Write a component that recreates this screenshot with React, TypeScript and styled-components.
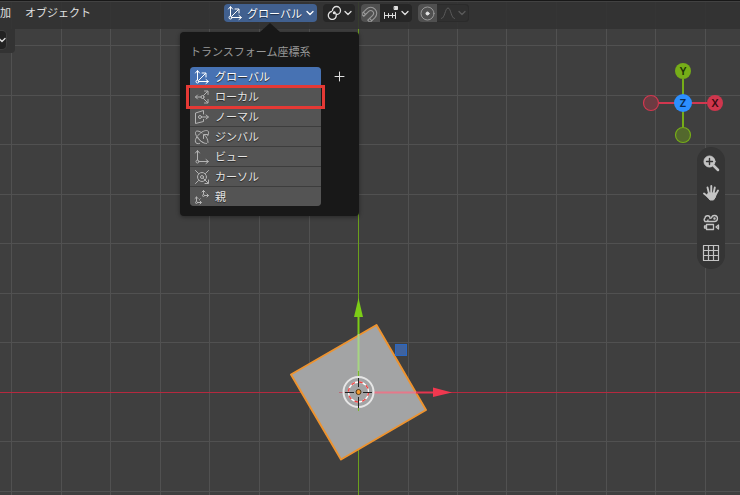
import React, { useState } from "react";
import styled, { createGlobalStyle, css } from "styled-components";

const GlobalStyle = createGlobalStyle`
  * { box-sizing: border-box; }
  body {
    margin: 0;
    background: #3f3f3f;
    color: #e0e0e0;
    font: 11px/16px "Noto Sans CJK JP", "Noto Sans", sans-serif;
  }
  button {
    margin: 0;
    padding: 0;
    border: 0;
    background: none;
    color: inherit;
    font: inherit;
  }
`;

const Editor = styled.div`
  position: relative;
  display: flex;
  flex-direction: column;
  min-height: 100vh;
  overflow: hidden;
`;

const Scene = styled.svg`
  position: absolute;
  inset: 0;
  width: 100%;
  height: 100%;
`;

const Header = styled.header`
  position: relative;
  z-index: 1;
  display: flex;
  align-items: flex-start;
  height: 29px;
  padding-top: 3px;
  border-top: 1px solid #181818;
  background: rgba(50, 50, 50, 0.9);
  box-shadow: inset 0 1px #424242;
`;

const MenuBar = styled.nav`
  display: flex;
  gap: 14px;
  width: 224px;
  text-shadow: 0 1px 1px #111;
`;

const Tools = styled.div`
  display: flex;
  gap: 6px;
`;

const Anchor = styled.div`
  position: relative;
`;

const Group = styled.div`
  display: flex;
  height: 18px;
  border-radius: 4px;
  overflow: hidden;
  background: #262626;
`;

const FadedGroup = styled(Group)`
  background: #303030;
  box-shadow: inset 0 0 0 1px #2b2b2b;
`;

const HeaderButton = styled.button<{ $tone?: "blue" | "raised" | "muted" }>`
  display: flex;
  align-items: center;
  gap: 2px;
  height: 18px;
  padding: 0 3px;
  color: #e0e0e0;
  ${(p) => p.$tone === "raised" && css`
    padding: 0 1px;
    background: #505050;
    color: #999;
  `}
  ${(p) => p.$tone === "muted" && css`color: #5a5a5a;`}
  ${(p) => p.$tone === "blue" && css`
    gap: 4px;
    width: 93px;
    border-radius: 4px;
    background: #41608f;
    color: #fff;
    text-shadow: 0 1px 1px #1b2b45;
  `}
`;

const Popover = styled.section`
  position: absolute;
  top: 28px;
  left: -44px;
  width: 179px;
  padding: 11px 10px 10px;
  border-radius: 4px;
  background: #181818;
  box-shadow: 0 1px 4px rgba(0, 0, 0, 0.4);

  &::before {
    content: "";
    position: absolute;
    left: 80px;
    bottom: 100%;
    border: solid transparent;
    border-width: 0 10px 9px;
    border-bottom-color: #181818;
  }
`;

const PopoverTitle = styled.h2`
  margin: 0 0 8px;
  font-size: 11px;
  font-weight: 400;
  line-height: 16px;
  color: #999;
`;

const PopoverBody = styled.div`
  display: flex;
  align-items: flex-start;
  justify-content: space-between;
`;

const OptionList = styled.div`
  display: grid;
  gap: 1px;
  width: 131px;
  border-radius: 4px;
  background: #3d3d3d;
`;

const Option = styled.button<{ $active: boolean }>`
  position: relative;
  display: flex;
  align-items: center;
  gap: 5px;
  height: 19px;
  padding: 0 4px;
  background: ${(p) => (p.$active ? "#4772b3" : "#545454")};
  color: ${(p) => (p.$active ? "#fff" : "#e6e6e6")};
  text-shadow: 0 1px 1px #222;

  &:first-child { border-radius: 4px 4px 0 0; }
  &:last-child { border-radius: 0 0 4px 4px; }
  svg { color: ${(p) => (p.$active ? "#fff" : "#b4b4b4")}; }
`;

const OptionLabel = styled.span`
  padding-bottom: 2px;
`;

const Highlight = styled.span`
  position: absolute;
  z-index: 1;
  inset: -2px -4px -3px;
  border: 3px solid #e53935;
`;

const AddButton = styled.button`
  display: grid;
  place-items: center;
  width: 19px;
  height: 19px;
`;

const AddSlot = styled.div`
  display: flex;
  width: 27px;
  padding-left: 8px;
`;

const Viewport = styled.main`
  position: relative;
  display: flex;
  justify-content: space-between;
  align-items: flex-start;
`;

const CornerTab = styled.div`
  width: 15px;
  height: 24px;
  padding-top: 2px;
  border-radius: 0 0 4px 0;
  background: #333;
`;

const CornerButton = styled.button`
  display: flex;
  align-items: center;
  justify-content: flex-end;
  width: 6px;
  height: 18px;
  overflow: hidden;
  border-radius: 0 4px 4px 0;
  background: #222;
  box-shadow: 0 0 0 1px #3e3e3e;
`;

const Navigation = styled.aside`
  display: flex;
  flex-direction: column;
  align-items: flex-end;
  gap: 3px;
  padding: 33px 15px 0 0;
`;

const NavTools = styled.div`
  display: grid;
  grid-auto-rows: 30px;
  width: 28px;
  padding: 1px 0;
  border-radius: 14px;
  background: #353535;
`;

const NavButton = styled.button`
  display: grid;
  place-items: center;
  color: #c4c4c4;
`;

const GizmoDrawing = styled.svg`
  margin-right: 1px;
`;

const Glyph = styled.svg.attrs({ "aria-hidden": true })`
  flex: none;
  fill: none;
  stroke: currentColor;
  stroke-linecap: round;
  stroke-linejoin: round;
`;

type Kind = "global" | "local" | "normal" | "gimbal" | "view" | "cursor" | "parent";

const drawings: Record<Kind, React.ReactNode> = {
  global: (
    <>
      <path d="M3.500 11V2M1.500 4l2-2.500 2 2.500M5 12.500h9M12 10.500l2.500 2-2.500 2M5 11l6.500-6.500M8 4h4v4" />
      <circle cx="3.500" cy="12.500" r="1.500" />
    </>
  ),
  local: (
    <>
      <path d="M7 8H1.500M3.500 6l-2 2 2 2M9.500 6.500l4-4M10.500 2H14v3.500M9.500 9.500l4 4M14 10.500V14h-3.500" />
      <circle cx="8.500" cy="8" r="1.500" />
    </>
  ),
  normal: (
    <>
      <path d="M9.500 5V1.500l-8 2.500v10.500l8-2V10.500M7.500 8H14M12 6l2.500 2-2.500 2" />
      <circle cx="6" cy="8" r="1.500" />
    </>
  ),
  gimbal: (
    <>
      <path d="M9 13.500C6 12.500 1 6.500 1.500 3.500 2 1 5.500 2 8 4M5.500 14.500C3.500 15 2 14.500 1.500 13 .5 10 4.500 5 8 3s6-2 6.500 0c.3 1.200-.2 2.500-.8 3.800" />
      <path d="M4 8.500C5.500 11.500 9 14.500 12.500 14.500M14 13.500c0-2.500-1-5-3.500-7.500M9.500 9.500V5.500h4" />
    </>
  ),
  view: (
    <>
      <path d="M3.500 11V2M1.500 4l2-2.500 2 2.500M5 12.500h9M12 10.500l2.500 2-2.500 2" />
      <circle cx="3.500" cy="12.500" r="1.500" />
    </>
  ),
  cursor: (
    <>
      <circle cx="8" cy="8" r="4.500" />
      <circle cx="8" cy="8" r="1.500" />
      <path d="M1.500 1.500l3 3M14.500 1.500l-3 3M1.500 14.500l3-3M9.500 9.500l4.500 4.500M14.500 11v3.500H11" />
    </>
  ),
  parent: (
    <>
      <path d="M9.500 5.500V1.500M8 3l1.500-1.500L11 3M10.500 6.500h4M13 5l1.500 1.500L13 8M2.500 12V8M1 9.500L2.500 8 4 9.500M3.500 13.500H7M6 12l1.500 1.500L6 15" />
      <circle cx="9.500" cy="6.500" r="1" />
      <circle cx="2.500" cy="13.500" r="1" />
      <path d="M5.500 10.500l2-2" strokeDasharray="1 2" />
    </>
  ),
};

const AxisIcon = ({ kind }: { kind: Kind }) => (
  <Glyph width="16" height="16" viewBox="0 0 16 16">{drawings[kind]}</Glyph>
);

const Chevron = () => (
  <Glyph width="8" height="8" viewBox="0 0 8 8" strokeWidth="1.300"><path d="M1 2.500l3 3 3-3" /></Glyph>
);

const options: { kind: Kind; label: string }[] = [
  { kind: "global", label: "グローバル" },
  { kind: "local", label: "ローカル" },
  { kind: "normal", label: "ノーマル" },
  { kind: "gimbal", label: "ジンバル" },
  { kind: "view", label: "ビュー" },
  { kind: "cursor", label: "カーソル" },
  { kind: "parent", label: "親" },
];

const SceneView = () => (
  <Scene viewBox="0 0 740 495" preserveAspectRatio="xMidYMid slice" aria-hidden="true">
    <g stroke="#515151" shapeRendering="crispEdges">
      {[11, 61, 110, 160, 209, 259, 309, 408, 457, 506, 556, 606, 655, 705].map((x) => (
        <path key={x} d={`M${x + 0.5} 0v495`} />
      ))}
      {[45, 95, 144, 194, 243, 293, 342, 441, 491].map((y) => (
        <path key={y} d={`M0 ${y + 0.5}h740`} />
      ))}
      <path stroke="#6ca01c" d="M358.500 0v495" />
      <path stroke="#b5293f" d="M0 392.500h740" />
    </g>
    <path d="M376.500 325L426 410l-85 49.500-50-85z" fill="#a3a4a5" stroke="#ed932f" strokeWidth="2" strokeLinejoin="round" />
    <path d="M358.500 317v17" stroke="#7ccd17" strokeWidth="2" />
    <path d="M358.500 334v42" stroke="#a6d582" strokeWidth="2" />
    <path d="M358.500 371v5M358.500 405v6" stroke="#7cb82a" />
    <path d="M354 317h9l-4.500-19z" fill="#7ccd17" />
    <path d="M374 392.500h42" stroke="#e6788a" strokeWidth="2" />
    <path d="M416 392.500h17" stroke="#e5354f" strokeWidth="2" />
    <path d="M339 392.500h6" stroke="#b96a76" />
    <path d="M433 387.500v9.500l19-4.500z" fill="#f0384f" />
    <rect x="395.500" y="344.500" width="11" height="11" fill="#3f639f" stroke="#2867c4" />
    <circle cx="358.500" cy="392" r="15" fill="none" stroke="#e6e6e6" strokeWidth="2" />
    <circle cx="358.500" cy="392" r="10" fill="none" stroke="#fff" strokeWidth="1.300" />
    <circle cx="358.500" cy="392" r="10" fill="none" stroke="#ef4444" strokeWidth="1.400" strokeDasharray="3.927" />
    <path d="M358.500 378v9M358.500 397v11M345 392.500h9M363 392.500h9" stroke="#222" />
    <circle cx="358.500" cy="392" r="2.500" fill="#f39a2e" stroke="#4b3418" />
  </Scene>
);

const Gizmo = () => (
  <GizmoDrawing width="82" height="82" viewBox="0 0 82 82" role="img" aria-label="X Y Z">
    <path d="M17 41h48" stroke="#d2374f" strokeWidth="2" />
    <path d="M41 17v48" stroke="#76ad18" strokeWidth="2" />
    <circle cx="9" cy="41" r="7.500" fill="#6c3b42" stroke="#d2374f" strokeWidth="1.200" />
    <circle cx="41" cy="73" r="7.500" fill="#53682d" stroke="#76ad18" strokeWidth="1.200" />
    <circle cx="73" cy="41" r="8" fill="#cf364d" />
    <circle cx="41" cy="9" r="8" fill="#76ad18" />
    <circle cx="41" cy="41" r="9" fill="#2c8fff" />
    <g fontFamily="Noto Sans, sans-serif" fontSize="11" fontWeight="600" textAnchor="middle">
      <text x="73" y="45" fill="#360b12">X</text>
      <text x="41" y="13" fill="#203306">Y</text>
      <text x="41" y="45" fill="#082b53">Z</text>
    </g>
  </GizmoDrawing>
);

export default function App() {
  const [active, setActive] = useState<Kind>("global");
  const current = options.find((o) => o.kind === active)!;

  return (
    <Editor>
      <GlobalStyle />
      <SceneView />
      <Header>
        <MenuBar>
          <button>加</button>
          <button>オブジェクト</button>
        </MenuBar>
        <Tools>
          <Anchor>
            <HeaderButton $tone="blue" aria-expanded="true">
              <AxisIcon kind={active} />
              {current.label}
              <Chevron />
            </HeaderButton>
            <Popover aria-label="トランスフォーム座標系">
              <PopoverTitle>トランスフォーム座標系</PopoverTitle>
              <PopoverBody>
                <OptionList>
                  {options.map((o) => (
                    <Option key={o.kind} $active={o.kind === active} onClick={() => setActive(o.kind)}>
                      <AxisIcon kind={o.kind} />
                      <OptionLabel>{o.label}</OptionLabel>
                      {o.kind === "local" && <Highlight />}
                    </Option>
                  ))}
                </OptionList>
                <AddSlot>
                  <AddButton aria-label="追加">
                    <Glyph width="11" height="11" viewBox="0 0 11 11"><path d="M5.500 1v9M1 5.500h9" /></Glyph>
                  </AddButton>
                </AddSlot>
              </PopoverBody>
            </Popover>
          </Anchor>
          <Group>
            <HeaderButton aria-label="ピボット">
              <Glyph width="16" height="16" viewBox="0 0 16 16" strokeWidth="1.300">
                <path d="M6.500 5.500A4 4 0 1 1 10.500 9.500M9.800 8.500A4 4 0 1 1 5.500 6.500" />
                <circle cx="8.300" cy="7.700" r=".9" fill="currentColor" />
              </Glyph>
              <Chevron />
            </HeaderButton>
          </Group>
          <Group>
            <HeaderButton $tone="raised" aria-label="スナップ">
              <Glyph width="17" height="17" viewBox="0 0 17 17" strokeWidth="1.100">
                <g transform="translate(8 9) rotate(45)">
                  <path d="M-6 6V-1a6 6 0 0 1 12 0V6H2.800V-1a2.800 2.800 0 0 0-5.600 0V6zM-6 3.500h3.200M2.800 3.500H6" />
                </g>
              </Glyph>
            </HeaderButton>
            <HeaderButton aria-label="スナップ先">
              <Glyph width="16" height="16" viewBox="0 0 16 16">
                <path d="M1.500 7.500v6M5.500 8.500v4M9.500 8.500v4M12.500 7.500v6M1.500 10.500h11" />
                <path d="M11.500 1.500h3v3h-3z" fill="currentColor" />
              </Glyph>
              <Chevron />
            </HeaderButton>
          </Group>
          <FadedGroup>
            <HeaderButton $tone="raised" aria-label="プロポーショナル編集">
              <Glyph width="17" height="17" viewBox="0 0 17 17">
                <circle cx="8.500" cy="8.500" r="6.500" />
                <circle cx="8.500" cy="8.500" r="1.500" fill="#e6e6e6" stroke="#e6e6e6" />
              </Glyph>
            </HeaderButton>
            <HeaderButton $tone="muted" aria-label="減衰">
              <Glyph width="16" height="16" viewBox="0 0 16 16">
                <path d="M1.500 13.500C5 13.500 5 3 8 3s3 10.500 6.500 10.500" />
              </Glyph>
              <Chevron />
            </HeaderButton>
          </FadedGroup>
        </Tools>
      </Header>
      <Viewport>
        <CornerTab>
          <CornerButton aria-label="モード"><Chevron /></CornerButton>
        </CornerTab>
        <Navigation>
          <Gizmo />
          <NavTools>
            <NavButton aria-label="ズーム">
              <Glyph width="18" height="18" viewBox="0 0 18 18">
                <circle cx="7.500" cy="7.500" r="5.500" fill="currentColor" />
                <path d="M12 12l4 4" strokeWidth="2.500" />
                <path d="M7.500 4.500v6M4.500 7.500h6" stroke="#333" strokeWidth="1.400" />
              </Glyph>
            </NavButton>
            <NavButton aria-label="移動">
              <Glyph width="18" height="18" viewBox="0 0 18 18" strokeWidth="1.900">
                <path d="M7 9.500L5.500 3.500M9.200 9L9.300 2M11.500 9.500l1.300-6M13.500 11l2.500-4.500M6.500 13L2 9.500" />
                <path d="M6.500 9h7.500l-.5 4-2 3h-3.500l-3-3.500z" fill="currentColor" strokeWidth="1" />
              </Glyph>
            </NavButton>
            <NavButton aria-label="カメラ">
              <Glyph width="18" height="18" viewBox="0 0 18 18" strokeWidth="1.300">
                <path d="M5.500 7.500h7a3 3 0 1 0-3-3.500L8 4.500A2.500 2.500 0 0 0 3 4a2.500 2.500 0 0 0 0 3.500h2a2 2 0 0 0 1-1.500" />
                <circle cx="12.500" cy="4.500" r=".6" />
                <path d="M4.500 10.500h7v5h-7zM4.500 12h-2v2h2M16.500 11v4L14 13z" />
              </Glyph>
            </NavButton>
            <NavButton aria-label="投影切替">
              <Glyph width="18" height="18" viewBox="0 0 18 18" strokeWidth="1.200">
                <path d="M1.500 1.500h15v15h-15zM6.500 1.500v15M11.500 1.500v15M1.500 6.500h15M1.500 11.500h15" />
              </Glyph>
            </NavButton>
          </NavTools>
        </Navigation>
      </Viewport>
    </Editor>
  );
}
